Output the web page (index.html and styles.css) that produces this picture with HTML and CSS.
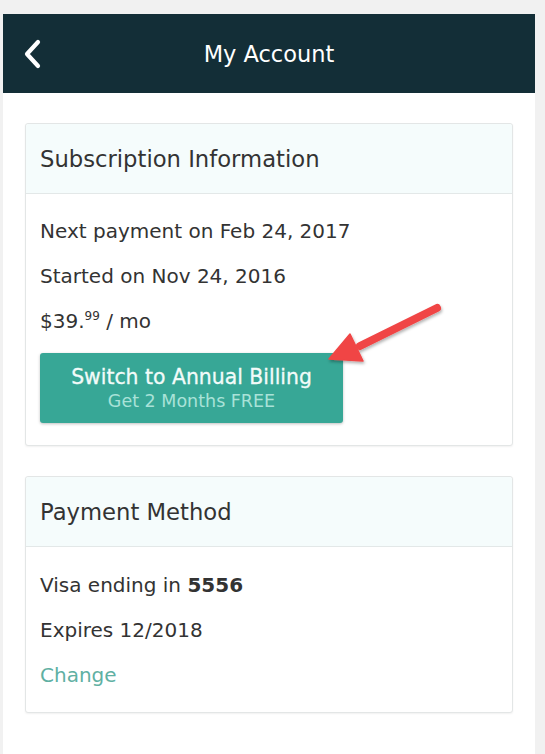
FILE: index.html
```html
<!DOCTYPE html>
<html>
<head>
<meta charset="utf-8">
<link rel="stylesheet" href="styles.css">
</head>
<body>
<div class="app">
  <header class="topbar">
    <span class="back">
      <svg width="20" height="30" viewBox="0 0 20 30"><path d="M16 3 L5 15 L16 27" fill="none" stroke="#fff" stroke-width="4.2" stroke-linecap="round" stroke-linejoin="round"/></svg>
    </span>
    <h1 class="title">My Account</h1>
  </header>
  <main class="content">
    <section class="card">
      <div class="card-head">Subscription Information</div>
      <div class="card-body card-body-sub">
        <p class="line">Next payment on Feb 24, 2017</p>
        <p class="line">Started on Nov 24, 2016</p>
        <p class="line">$39.<sup class="cents">99</sup> / mo</p>
        <button class="annual">
          <span class="annual-main">Switch to Annual Billing</span>
          <span class="annual-sub">Get 2 Months FREE</span>
        </button>
      </div>
      <svg class="arrow" width="130" height="80" viewBox="0 0 130 80">
        <defs>
          <filter id="sh" x="-20%" y="-20%" width="140%" height="140%">
            <feDropShadow dx="1" dy="2" stdDeviation="1.5" flood-color="#000" flood-opacity="0.3"/>
          </filter>
        </defs>
        <g filter="url(#sh)">
          <path d="M117 18 L40 56" stroke="#f04545" stroke-width="8" stroke-linecap="round" fill="none"/>
          <path d="M9 69 L30 44 L43 71 Z" fill="#f04545" stroke="#f04545" stroke-width="1.5" stroke-linejoin="round"/>
        </g>
      </svg>
    </section>
    <section class="card">
      <div class="card-head">Payment Method</div>
      <div class="card-body card-body-pay">
        <p class="line">Visa ending in <b>5556</b></p>
        <p class="line">Expires 12/2018</p>
        <p class="line"><a class="link" href="#">Change</a></p>
      </div>
    </section>
  </main>
</div>
</body>
</html>
```
FILE: styles.css
```css
html, body {
  margin: 0;
  padding: 0;
}
body {
  background: #f1f1f1;
  font-family: "DejaVu Sans", Verdana, sans-serif;
  color: #333;
}
.app {
  margin: 14px 10px 0 3px;
  background: #fff;
  min-height: 740px;
}
.topbar {
  position: relative;
  height: 79px;
  background: #132e37;
  display: flex;
  align-items: center;
  justify-content: center;
}
.back {
  position: absolute;
  left: 19px;
  top: 25px;
  display: block;
  line-height: 0;
}
.title {
  margin: 0;
  color: #fff;
  font-size: 22.5px;
  font-weight: normal;
}
.content {
  padding: 30px 22px 0 22px;
  display: flex;
  flex-direction: column;
  gap: 30px;
}
.card {
  position: relative;
  border: 1px solid #e3e6e6;
  border-radius: 3px;
  box-shadow: 0 1px 2px rgba(0,0,0,0.06);
  background: #fff;
}
.card-head {
  height: 69px;
  display: flex;
  align-items: center;
  padding: 0 14px;
  background: #f5fcfc;
  border-bottom: 1px solid #e3e8e8;
  font-size: 22.7px;
  color: #333;
  border-radius: 3px 3px 0 0;
}
.card-body {
  padding: 15px 14px 16px;
}
.card-body-sub {
  padding-bottom: 22px;
}
.card-body-pay {
  padding-top: 16px;
  padding-bottom: 14px;
}
.line {
  margin: 0;
  height: 45px;
  line-height: 45px;
  font-size: 20px;
  color: #333;
}
.cents {
  font-size: 12px;
  vertical-align: 0;
  position: relative;
  top: -8px;
}
.line b {
  font-weight: bold;
}
.link {
  color: #5fb0a3;
  text-decoration: none;
}
.annual {
  margin-top: 9px;
  width: 303px;
  height: 70px;
  border: 0;
  border-radius: 3px;
  background: #37a796;
  box-shadow: 0 1px 3px rgba(0,0,0,0.25);
  display: flex;
  flex-direction: column;
  align-items: center;
  justify-content: center;
  gap: 2px;
  font-family: inherit;
  padding: 0;
}
.annual-main {
  color: #f2fbf9;
  font-size: 20.4px;
  -webkit-text-stroke: 0.3px #f2fbf9;
}
.annual-sub {
  color: #a9e2d8;
  font-size: 17.5px;
}
.arrow {
  position: absolute;
  left: 294px;
  top: 166px;
}
```
